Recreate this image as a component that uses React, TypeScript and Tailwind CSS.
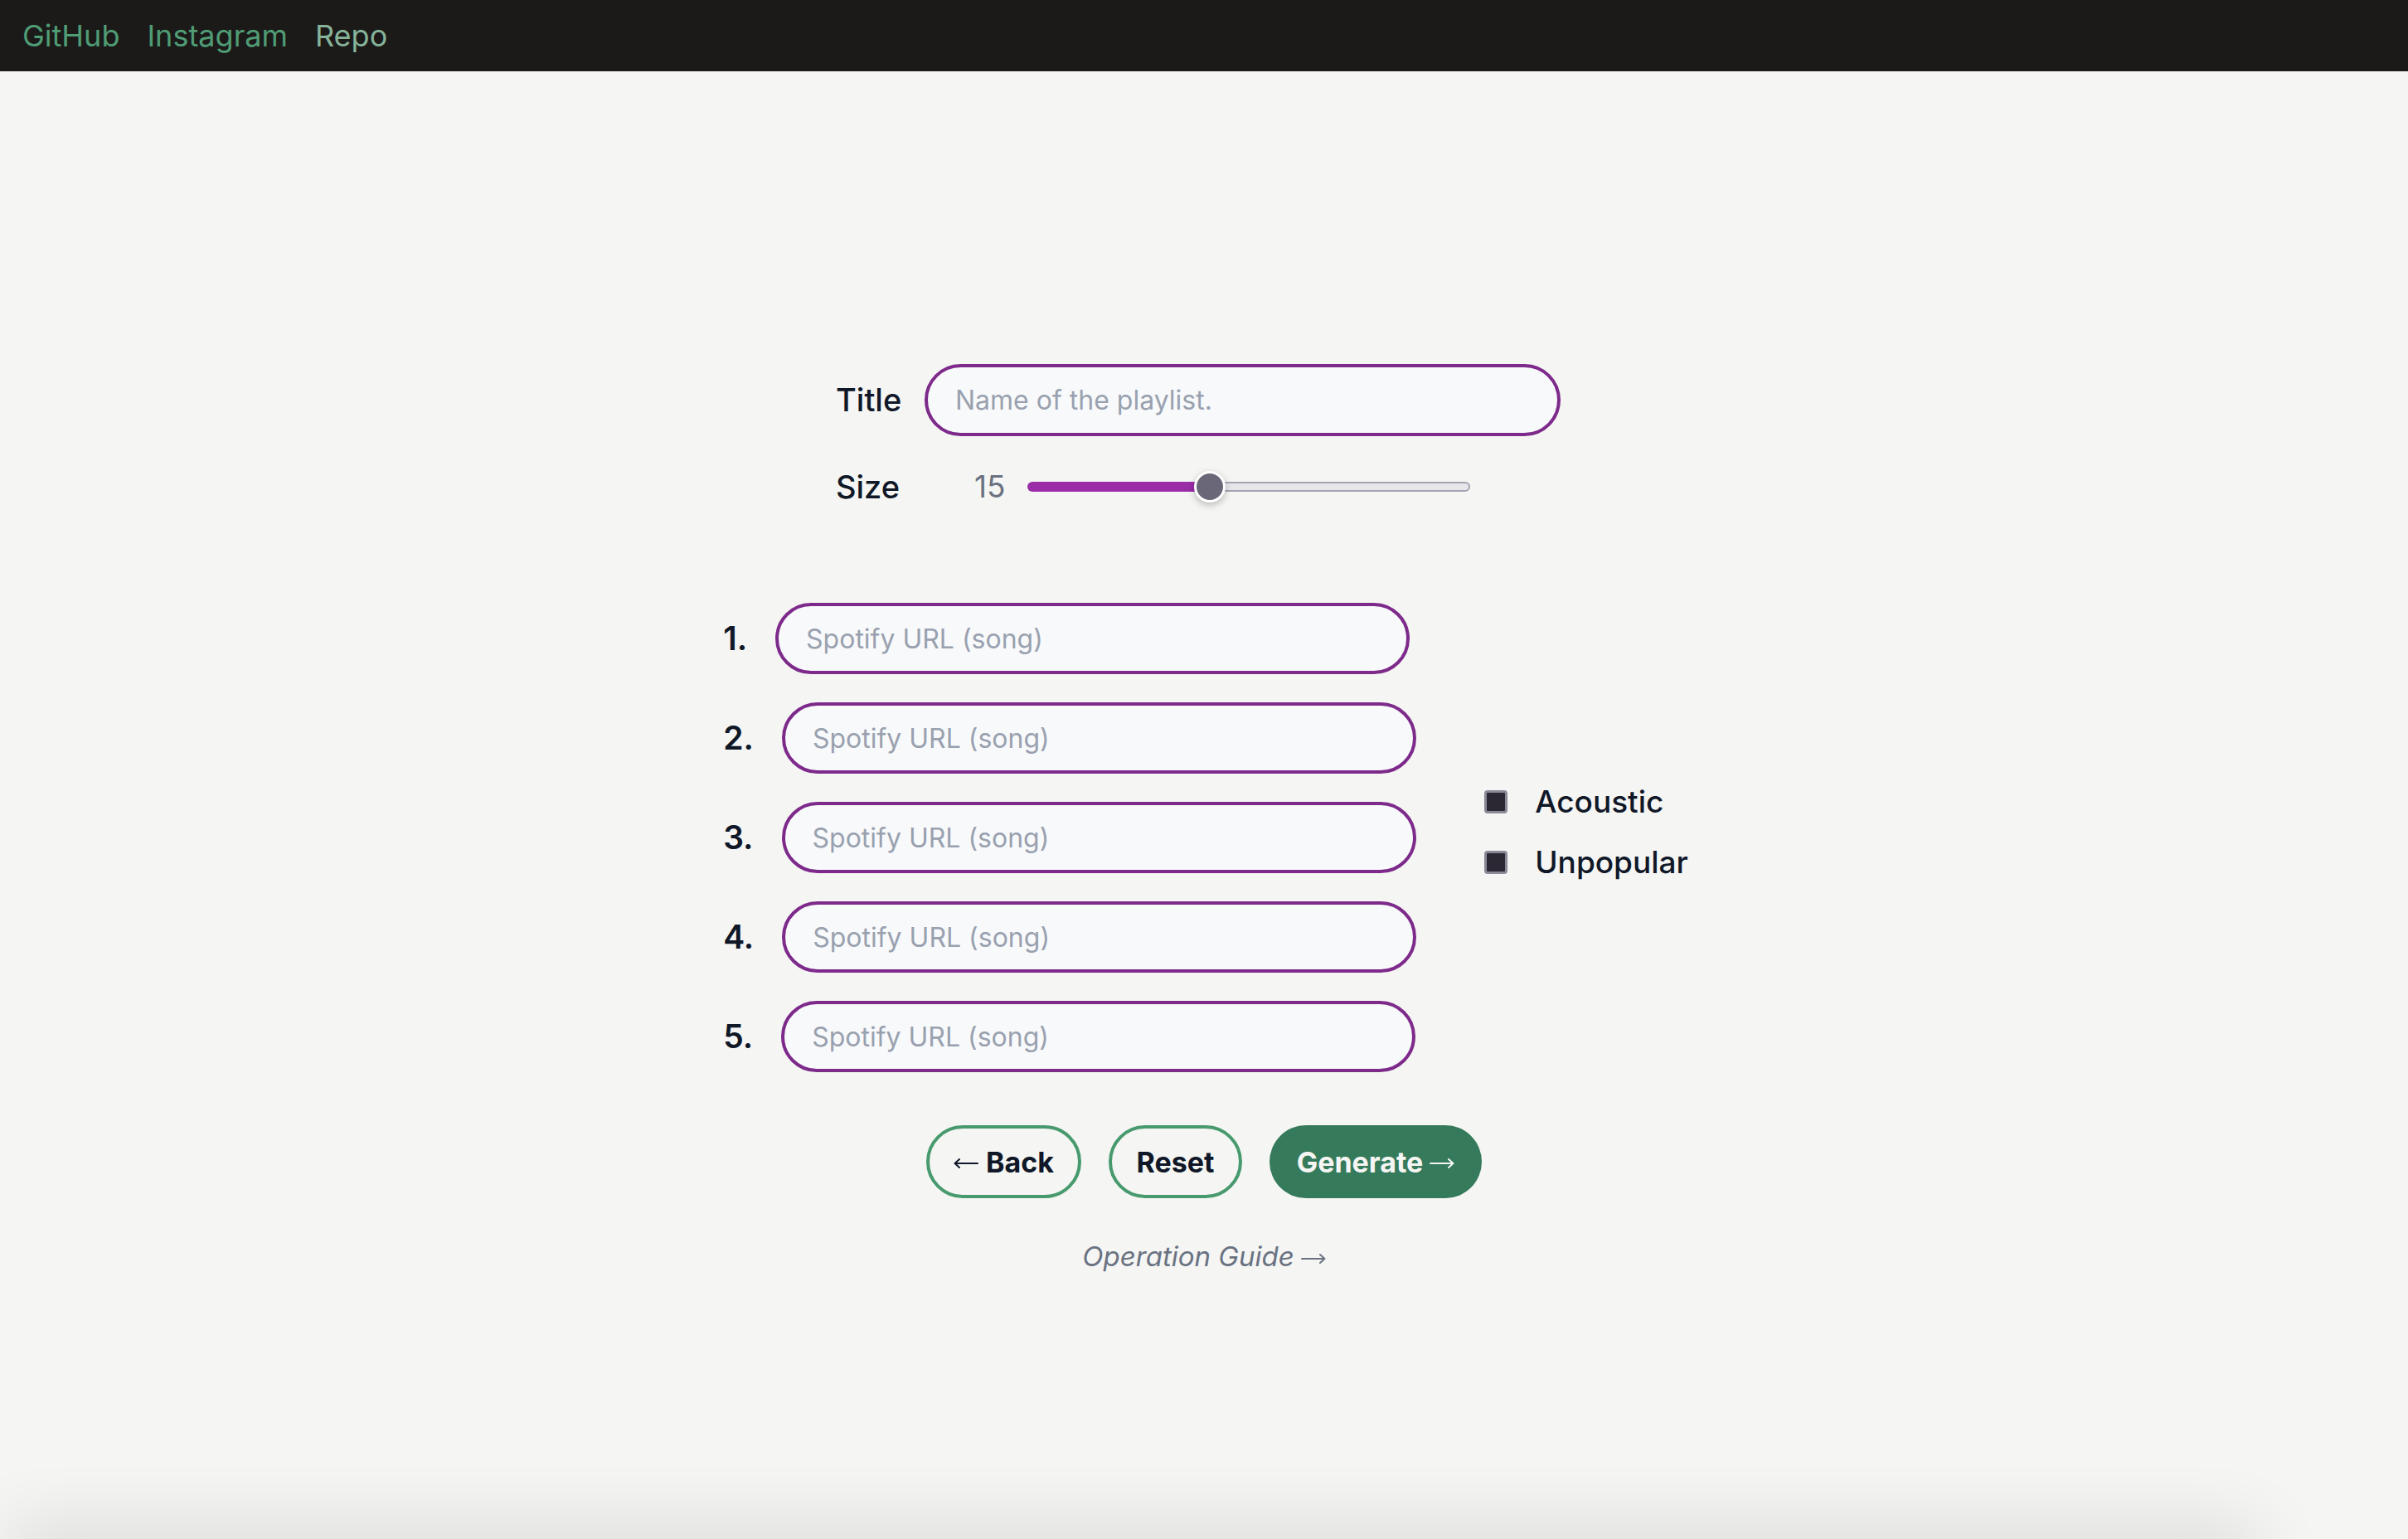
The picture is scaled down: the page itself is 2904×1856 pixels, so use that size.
import { useState } from 'react';

const songSlots = [1, 2, 3, 4, 5];

function Arrow({ left = false, className = '' }: { left?: boolean; className?: string }) {
  return (
    <svg
      viewBox="0 0 30 14"
      className={`w-[30px] h-[14px] shrink-0 ${className}`}
      fill="none"
      stroke="currentColor"
      strokeWidth={2}
      strokeLinecap="round"
      strokeLinejoin="round"
    >
      {left ? <path d="M29 7H1.5M7 2L1.5 7 7 12" /> : <path d="M1 7h27.5M23 2l5.5 5-5.5 5" />}
    </svg>
  );
}

function SizeSlider({ value }: { value: number }) {
  // range 1..35, value 15 sits around 220px on a 534px track
  const pct = ((value - 1) / 34) * 100;
  return (
    <div className="relative w-[534px] h-[36px] flex items-center">
      <div className="flex w-full h-[12px]">
        <div className="h-full bg-[#9a2ca8] rounded-l-full" style={{ width: `${pct}%` }} />
        <div className="h-full flex-1 bg-[#e7e6eb] border-2 border-[#a6a4b3] rounded-r-full" />
      </div>
      <div
        className="absolute top-0 w-[38px] h-[38px] -mt-[1px] rounded-full bg-[#6a6878] border-[3px] border-white shadow-[0_3px_8px_rgba(0,0,0,0.25)]"
        style={{ left: `calc(${pct}% - 19px)` }}
      />
    </div>
  );
}

export default function App() {
  const [size] = useState(15);

  return (
    <div className="h-screen overflow-hidden flex flex-col bg-[#f5f5f3] font-['Inter','Noto_Sans',sans-serif]">
      <nav className="h-[86px] shrink-0 bg-[#1b1a19] flex items-center gap-[33px] px-[27px] text-[36px]">
        <a className="text-[#4f9c75]" href="#">GitHub</a>
        <a className="text-[#4f9c75]" href="#">Instagram</a>
        <a className="text-[#86b39a]" href="#">Repo</a>
      </nav>

      <main className="flex-1 flex flex-col items-center">
        <div className="mt-[353px] mr-[14px] w-[874px] flex flex-col">
          <div className="flex items-center">
            <label className="w-[107px] text-[38px] font-medium text-gray-900">Title</label>
            <input
              className="w-[767px] h-[87px] rounded-full border-[4px] border-[#7d2a8b] bg-[#f8f9fb] pl-[33px] text-[32px] text-gray-900 placeholder:text-gray-400 outline-none"
              placeholder="Name of the playlist."
            />
          </div>
          <div className="mt-[43px] flex items-center h-[36px]">
            <label className="w-[167px] text-[38px] font-medium text-gray-900">Size</label>
            <span className="w-[64px] text-[37px] text-gray-500">{size}</span>
            <SizeSlider value={size} />
          </div>
        </div>

        <div className="mt-[122px] ml-[4px] flex items-center gap-[82px]">
          <div className="flex flex-col gap-[34px]">
            {songSlots.map((n) => (
              <div key={n} className="flex items-center gap-[34px]">
                <span className="text-[39px] font-semibold text-gray-900">{n}.</span>
                <input
                  className="w-[765px] h-[86px] rounded-full border-[4px] border-[#7d2a8b] bg-[#f8f9fb] pl-[33px] text-[32px] text-gray-900 placeholder:text-gray-400 outline-none"
                  placeholder="Spotify URL (song)"
                />
              </div>
            ))}
          </div>
          <div className="flex flex-col gap-[26px] -mt-[14px]">
            {['Acoustic', 'Unpopular'].map((opt) => (
              <label key={opt} className="flex items-center gap-[33px] h-[47px]">
                <span className="w-[28px] h-[28px] rounded-[4px] border-[3px] border-[#8b8897] bg-[#2b2833]" />
                <span className="text-[37px] font-medium text-gray-900">{opt}</span>
              </label>
            ))}
          </div>
        </div>

        <div className="mt-[64px] flex items-center gap-[33px]">
          <button className="w-[187px] h-[88px] rounded-full border-[4px] border-[#479a6d] flex items-center justify-center gap-[9px] text-[34px] font-bold text-gray-900">
            <Arrow left className="mt-[3px]" />
            Back
          </button>
          <button className="w-[161px] h-[88px] rounded-full border-[4px] border-[#479a6d] flex items-center justify-center text-[34px] font-bold text-gray-900">
            Reset
          </button>
          <button className="w-[256px] h-[88px] rounded-full bg-[#357a5b] flex items-center justify-center gap-[8px] text-[34px] font-bold text-[#f5f5f3]">
            Generate
            <Arrow className="mt-[3px]" />
          </button>
        </div>

        <a href="#" className="mt-[46px] flex items-center gap-[8px] text-[33px] italic text-gray-500">
          Operation Guide
          <Arrow className="mt-[4px]" />
        </a>
      </main>

      <div className="shrink-0 h-[40px] -mb-[40px] ml-[10px] w-[2710px] bg-[#f5f5f3] shadow-[0_0_90px_rgba(0,0,0,0.2)]" />
    </div>
  );
}
